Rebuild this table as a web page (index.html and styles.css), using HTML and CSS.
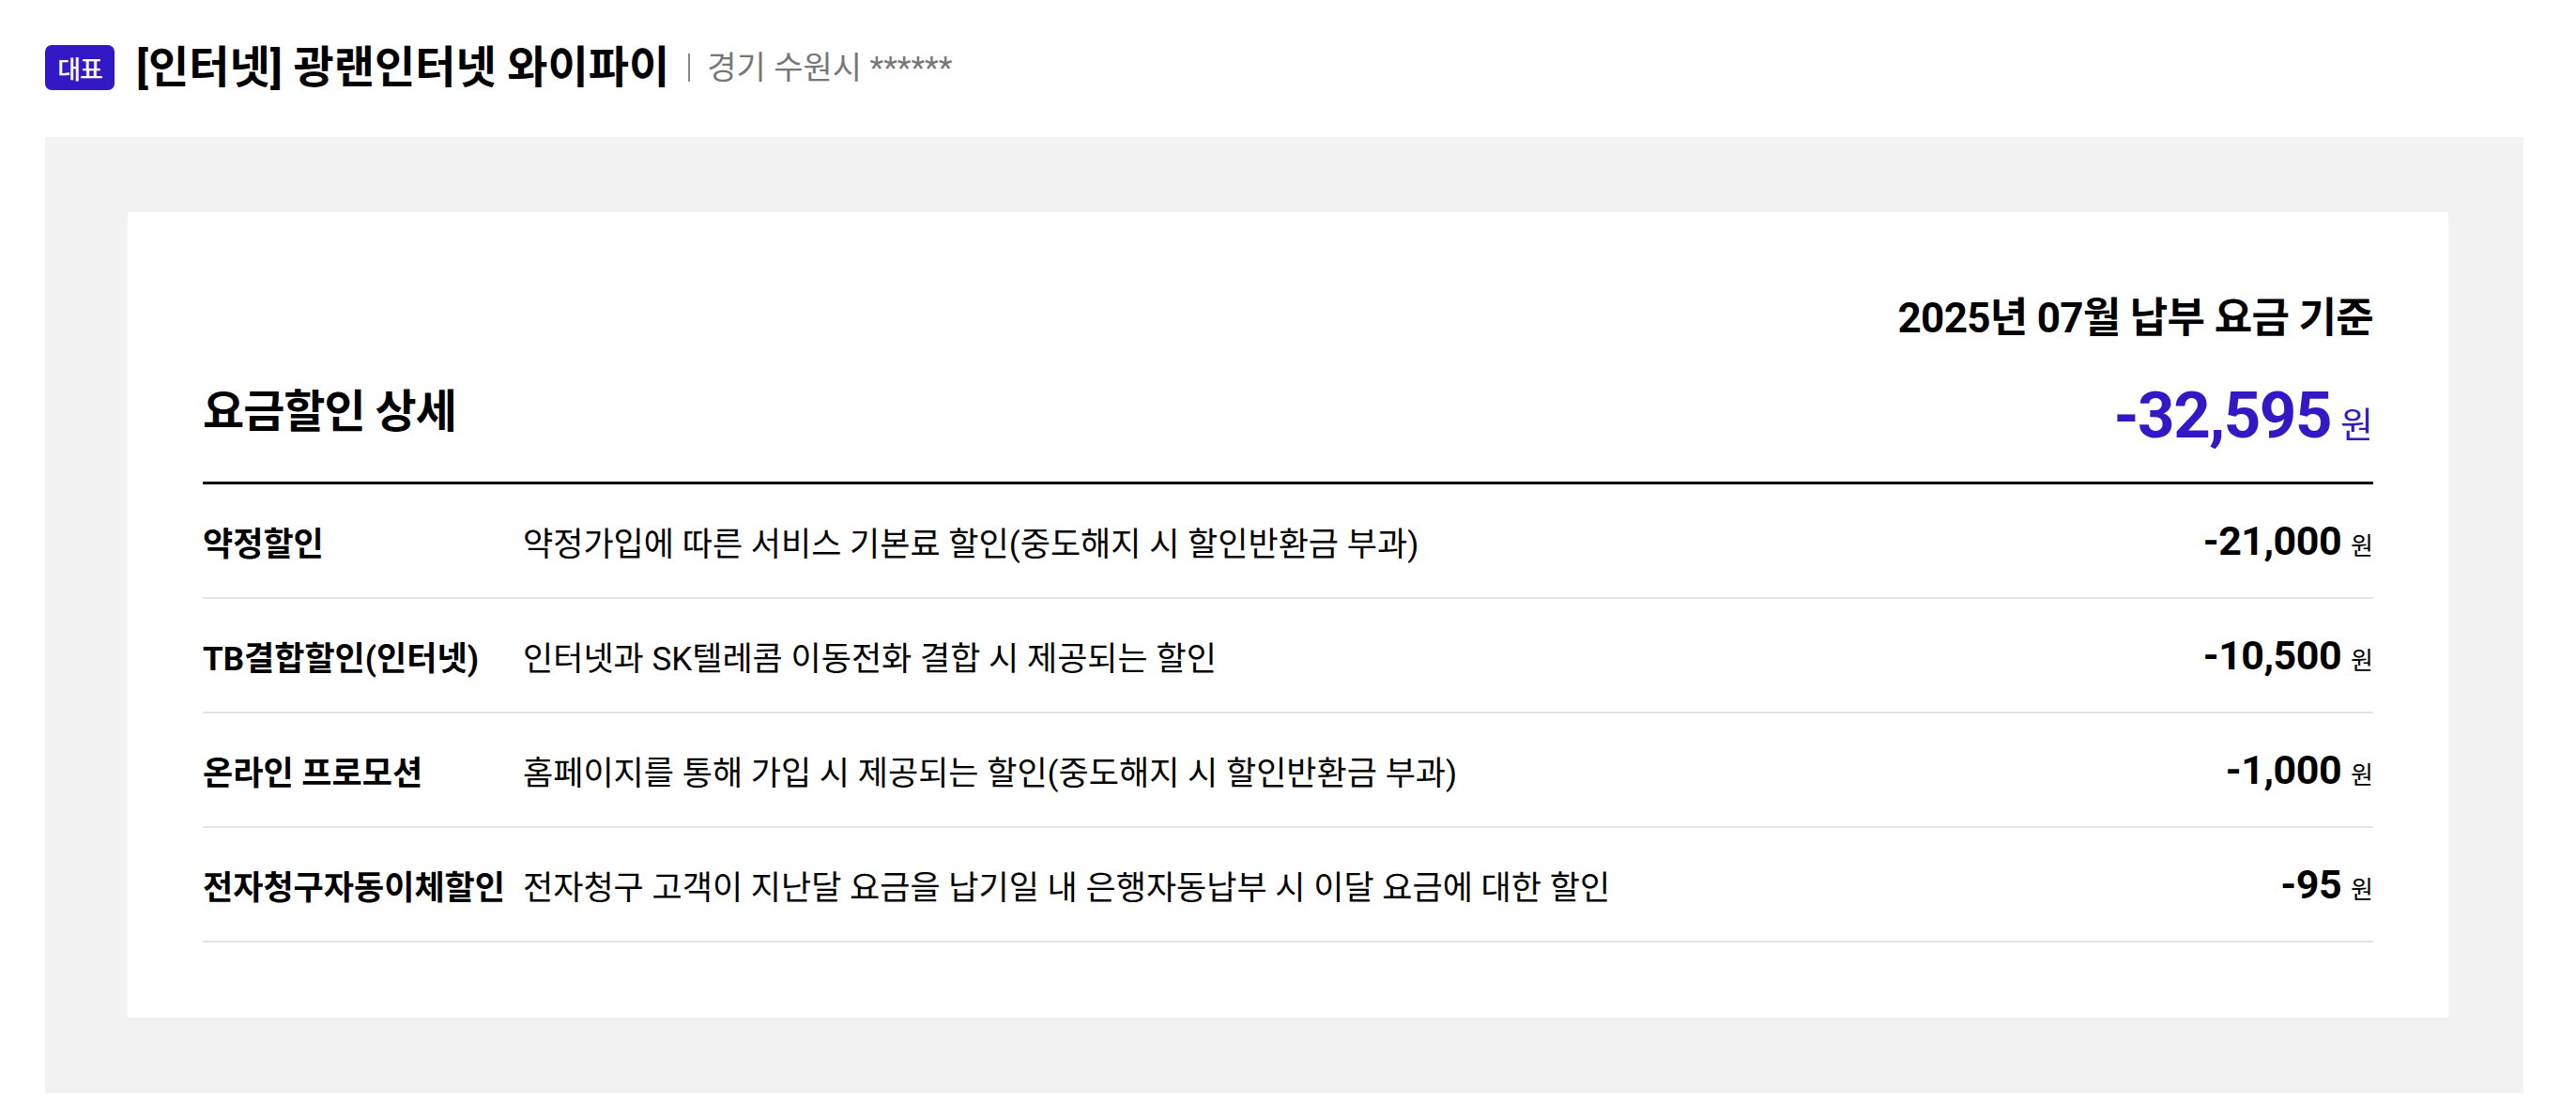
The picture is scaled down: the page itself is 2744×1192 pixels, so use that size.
FILE: index.html
```html
<!DOCTYPE html>
<html lang="ko">
<head>
<meta charset="utf-8">
<title>요금할인 상세</title>
<link rel="stylesheet" href="styles.css">
</head>
<body>
<div class="page">
  <header class="header">
    <span class="badge">대표</span>
    <h1 class="title">[인터넷] 광랜인터넷 와이파이</h1>
    <span class="addr">경기 수원시 ******</span>
  </header>
  <section class="panel">
    <div class="card">
      <div class="basis">2025년 07월 납부 요금 기준</div>
      <div class="summary">
        <h2 class="summary-title">요금할인 상세</h2>
        <div class="total"><span class="total-num">-32,595</span><span class="total-unit">원</span></div>
      </div>
      <div class="rows">
        <div class="row">
          <div class="label">약정할인</div>
          <div class="desc">약정가입에 따른 서비스 기본료 할인(중도해지 시 할인반환금 부과)</div>
          <div class="amount"><span class="num">-21,000</span><span class="unit">원</span></div>
        </div>
        <div class="row">
          <div class="label">TB결합할인(인터넷)</div>
          <div class="desc">인터넷과 SK텔레콤 이동전화 결합 시 제공되는 할인</div>
          <div class="amount"><span class="num">-10,500</span><span class="unit">원</span></div>
        </div>
        <div class="row">
          <div class="label">온라인 프로모션</div>
          <div class="desc">홈페이지를 통해 가입 시 제공되는 할인(중도해지 시 할인반환금 부과)</div>
          <div class="amount"><span class="num">-1,000</span><span class="unit">원</span></div>
        </div>
        <div class="row">
          <div class="label">전자청구자동이체할인</div>
          <div class="desc">전자청구 고객이 지난달 요금을 납기일 내 은행자동납부 시 이달 요금에 대한 할인</div>
          <div class="amount"><span class="num">-95</span><span class="unit">원</span></div>
        </div>
      </div>
    </div>
  </section>
</div>
</body>
</html>
```

FILE: styles.css
```css
* { box-sizing: border-box; }
html, body { margin: 0; padding: 0; background: #fff; }
body {
  font-family: Roboto, "Noto Sans CJK KR", "Noto Sans", sans-serif;
  color: #000;
}
.page {
  padding: 48px 56px 28px 48px;
}
.header {
  display: flex;
  align-items: center;
  height: 48px;
  margin-bottom: 50px;
}
.badge {
  width: 74px;
  height: 48px;
  border-radius: 7px;
  background: #3319c6;
  color: #fff;
  font-size: 27px;
  font-weight: 500;
  display: flex;
  align-items: center;
  justify-content: center;
  letter-spacing: -1px;
}
.title {
  margin: 0 0 0 23px;
  font-size: 47px;
  font-weight: 700;
  letter-spacing: 0;
  line-height: 48px;
}
.addr {
  margin-left: 20px;
  padding-left: 18px;
  border-left: 2px solid #8a8a8a;
  font-size: 34px;
  line-height: 30px;
  color: #777;
}
.panel {
  background: #f2f2f2;
  padding: 80px 80px 80px 88px;
}
.card {
  background: #fff;
  padding: 83px 80px 80px 80px;
}
.basis {
  text-align: right;
  font-size: 44px;
  font-weight: 700;
  line-height: 60px;
  letter-spacing: -0.7px;
}
.summary {
  display: flex;
  align-items: center;
  justify-content: space-between;
  margin-top: 32px;
  padding-bottom: 18px;
  border-bottom: 3px solid #000;
}
.summary-title {
  margin: 0 0 18px 0;
  font-size: 48px;
  font-weight: 700;
  letter-spacing: -1px;
  line-height: 66px;
}
.total {
  display: flex;
  align-items: baseline;
  color: #3319c6;
  line-height: 84px;
}
.total-num {
  font-size: 69px;
  font-weight: 700;
  letter-spacing: -1.5px;
}
.total-unit {
  font-size: 38px;
  margin-left: 10px;
}
.row {
  display: grid;
  grid-template-columns: 341px 1fr auto;
  align-items: center;
  height: 122px;
  border-bottom: 2px solid #e4e4e4;
}
.label {
  font-size: 35px;
  font-weight: 700;
  white-space: nowrap;
}
.desc {
  font-size: 35px;
}
.amount {
  display: flex;
  align-items: baseline;
  justify-content: flex-end;
}
.num {
  font-size: 43px;
  font-weight: 700;
  letter-spacing: -0.5px;
}
.unit {
  font-size: 26px;
  margin-left: 10px;
}
```
